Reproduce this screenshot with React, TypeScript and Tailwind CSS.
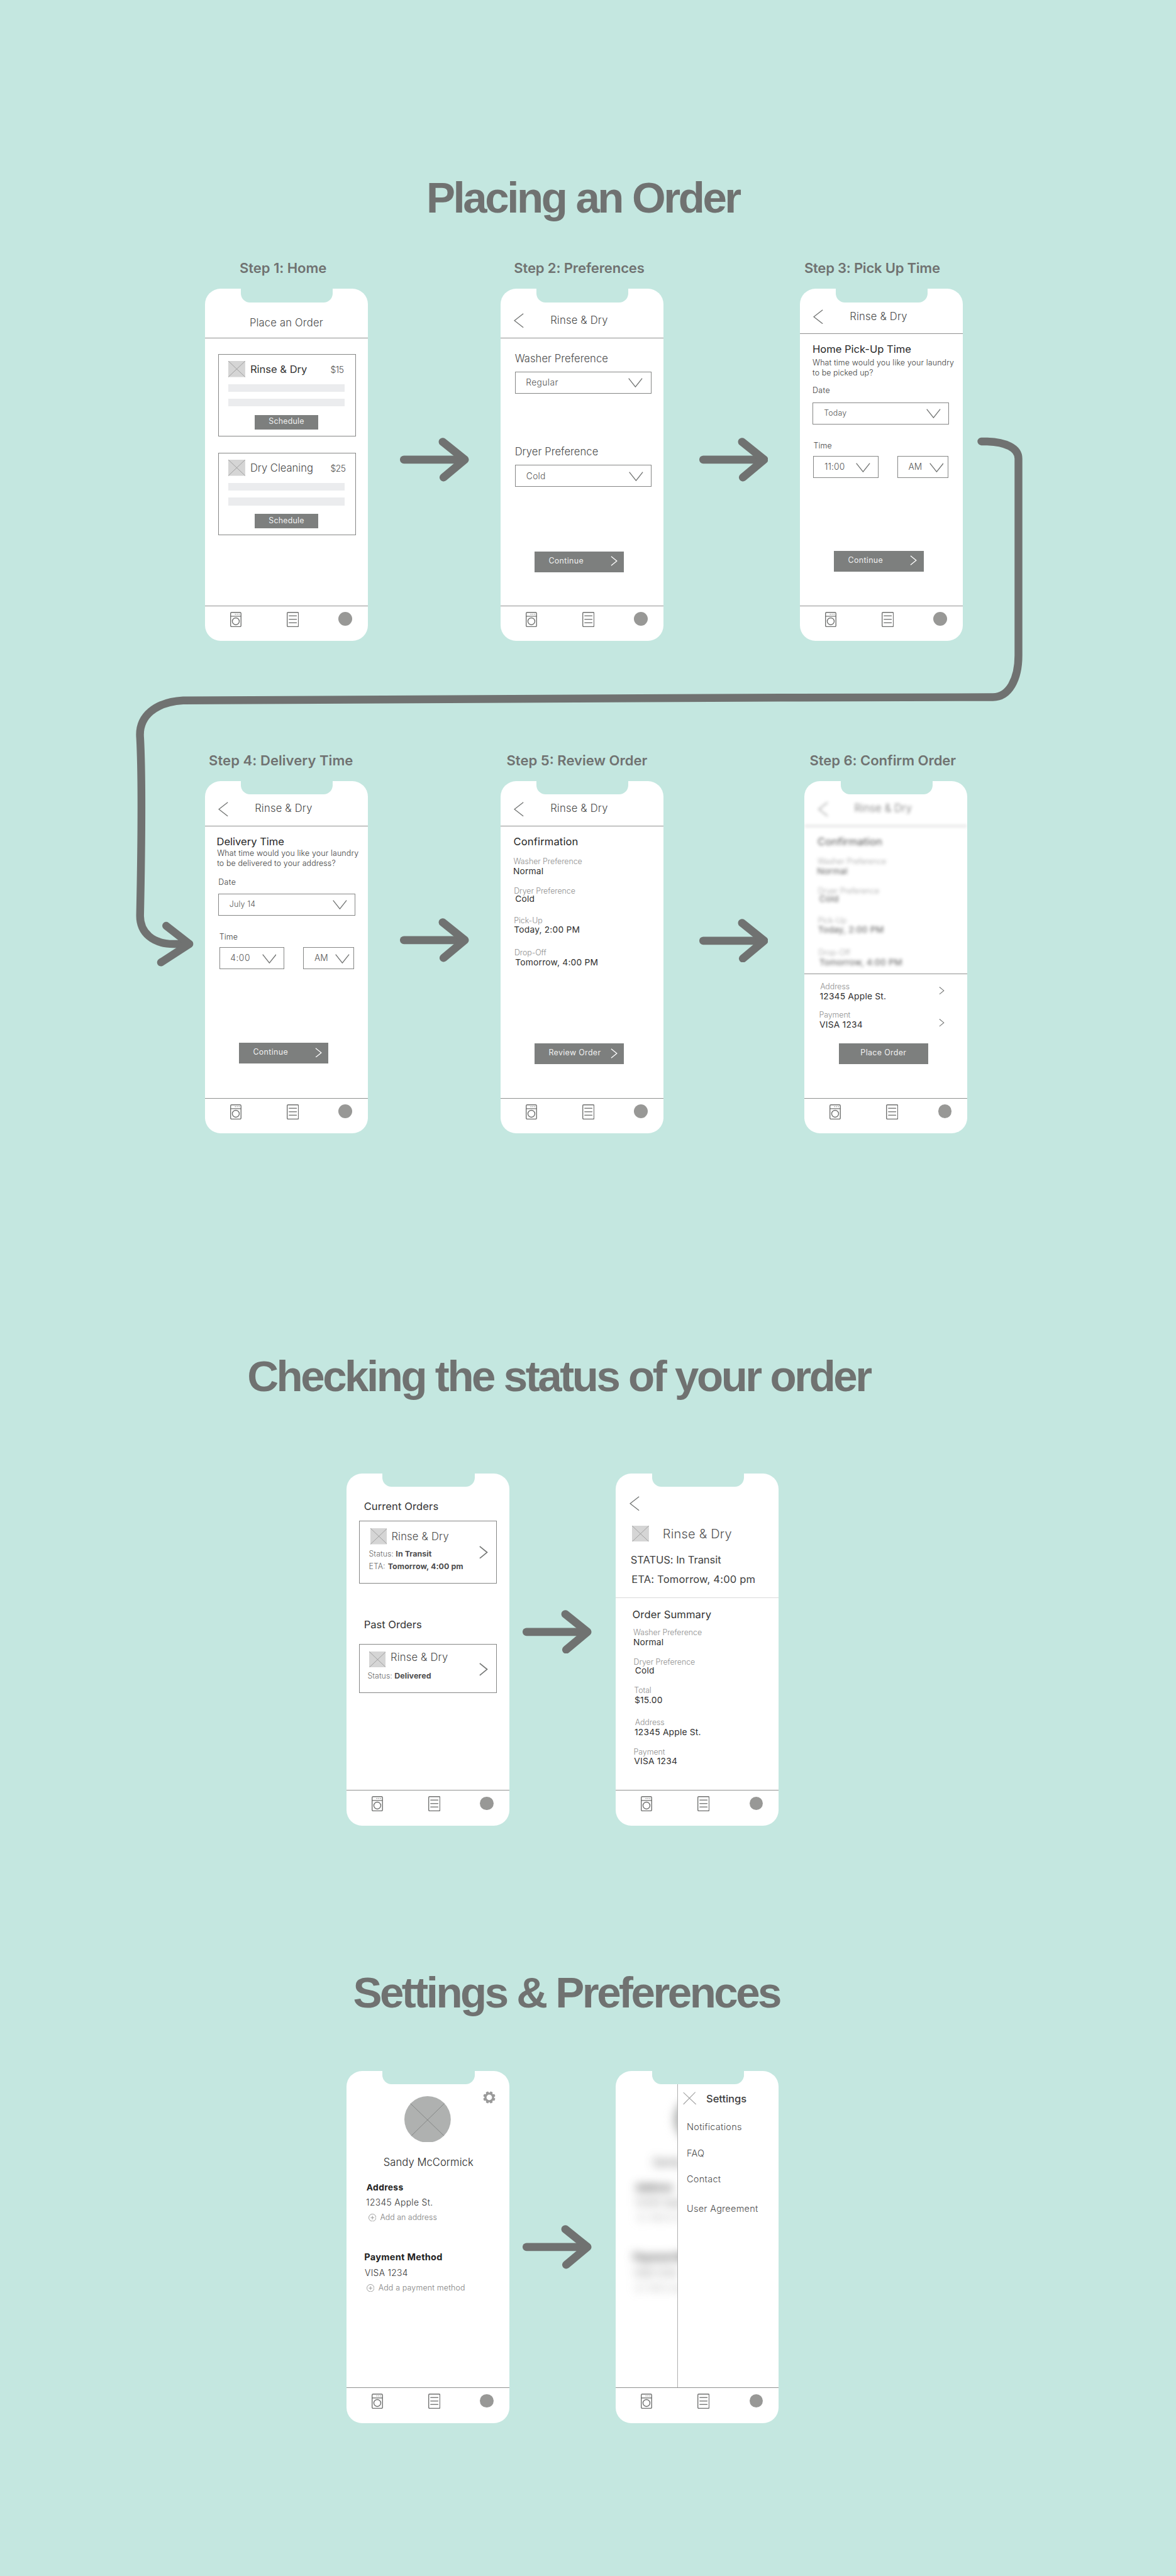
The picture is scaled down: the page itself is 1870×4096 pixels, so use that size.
import type { ReactNode } from "react";

/* ---------- drawings ---------- */

function Arrow({ className }: { className: string }) {
  return (
    <svg
      className={`h-[101px] w-[159px] shrink-0 ${className}`}
      viewBox="0 0 159 101"
      fill="none"
      stroke="#707271"
      strokeWidth="18.5"
      strokeLinecap="round"
      strokeLinejoin="round"
    >
      <path d="M9.2 50.5H148" />
      <path d="M98.5 9.5L149.5 50.5L100.5 91.5" />
    </svg>
  );
}

function Connector() {
  return (
    <svg
      className="pointer-events-none absolute left-[300px] top-[990px] h-[1260px] w-[2080px]"
      viewBox="300 990 2080 1260"
      fill="none"
      stroke="#707271"
      strokeWidth="18"
      strokeLinecap="round"
      strokeLinejoin="round"
    >
      <path d="M2262.5 1017.5H2276C2318 1019 2348 1032 2348 1057V1511C2348 1566 2326 1607 2289 1607L1800 1608L422 1614.5C360 1618 318 1650 323 1702C328 1800 326 1960 322.8 2111C322.8 2150 352 2176 400 2176H436" />
      <path d="M383 2134L436.5 2176L371 2218.5" />
    </svg>
  );
}

function BackChevron({ className = "" }: { className?: string }) {
  return (
    <svg className={`h-[34px] w-[23px] shrink-0 ${className}`} viewBox="0 0 23 34" fill="none" stroke="#737574" strokeWidth="2">
      <path d="M22 1L1.5 17L22 33" />
    </svg>
  );
}

function DownChevron({ className = "" }: { className?: string }) {
  return (
    <svg className={`h-[22px] w-[33px] shrink-0 ${className}`} viewBox="0 0 33 22" fill="none" stroke="#737574" strokeWidth="2">
      <path d="M1 1L16.5 20.5L32 1" />
    </svg>
  );
}

function NextChevron({ className }: { className: string }) {
  return (
    <svg className={`shrink-0 ${className}`} viewBox="0 0 16 24" fill="none" stroke="currentColor" strokeWidth="2">
      <path d="M1 1L14.5 12L1 23" />
    </svg>
  );
}

function Thumb({ className }: { className: string }) {
  return (
    <svg className={`h-[37px] w-[39px] shrink-0 ${className}`} viewBox="0 0 39 37">
      <rect width="39" height="37" fill="#D5D5D5" />
      <path d="M0 0L39 37M39 0L0 37" stroke="#9B9B9B" strokeWidth="1.3" />
    </svg>
  );
}

function WasherIcon() {
  return (
    <svg className="h-[35px] w-[26px]" viewBox="0 0 26 35" fill="none" stroke="#6F706F" strokeWidth="2">
      <rect x="1" y="1" width="24" height="33" rx="2.5" />
      <path d="M1 10H25" />
      <circle cx="13" cy="21.7" r="8" />
      <path d="M11 5.5h2M15.2 5.5h2M19.6 5.5h2" strokeWidth="1.6" />
    </svg>
  );
}

function ListIcon() {
  return (
    <svg className="h-[35px] w-[28px]" viewBox="0 0 28 35" fill="none" stroke="#6F706F" strokeWidth="2">
      <rect x="1" y="1" width="26" height="33" rx="2" />
      <path d="M5.5 9H22.5M5.5 17H22.5M5.5 25H22.5" stroke="#808180" strokeLinecap="round" />
    </svg>
  );
}

const TEETH = [22.5, 67.5, 112.5, 157.5, 202.5, 247.5, 292.5, 337.5];

function Gear() {
  return (
    <svg className="absolute left-[315px] top-[47px] size-[29px]" viewBox="-14.5 -14.5 29 29">
      <circle r="8.8" fill="none" stroke="#9A9A9A" strokeWidth="4.8" />
      {TEETH.map((angle) => (
        <rect key={angle} x="-3.1" y="-14" width="6.2" height="6.5" rx="1.6" fill="#9A9A9A" transform={`rotate(${angle})`} />
      ))}
    </svg>
  );
}

function PlusCircle() {
  return (
    <svg className="size-[18px] shrink-0" viewBox="0 0 18 18" fill="none" stroke="#8A8A8A" strokeWidth="1.2">
      <circle cx="9" cy="9" r="8.3" />
      <path d="M9 4.8V13.2M4.8 9H13.2" />
    </svg>
  );
}

/* ---------- phone parts ---------- */

function Phone({ children }: { children: ReactNode }) {
  return (
    <div className="relative flex h-[812px] w-[375px] shrink-0 flex-col overflow-hidden rounded-[36px] bg-white">
      <div className="absolute left-[83px] top-0 z-10 h-[31px] w-[212px] rounded-b-[21px] bg-[#C4E7E0]" />
      <div className="relative flex h-[730px] flex-col items-start overflow-hidden">{children}</div>
      <div className="flex h-[82px] items-start border-t border-[#8F908F] pt-[13px]">
        <div className="ml-[58px]">
          <WasherIcon />
        </div>
        <div className="ml-[104px]">
          <ListIcon />
        </div>
        <div className="ml-[92px] mt-px size-[31px] rounded-full bg-[#989896]" />
      </div>
    </div>
  );
}

function Header({ title, className = "h-[104px] pt-[24px]", back = true }: { title: string; className?: string; back?: boolean }) {
  return (
    <div className={`flex w-full shrink-0 items-center border-b border-[#8F908F] ${className}`}>
      {back && <BackChevron className="ml-[31px] mt-[2px]" />}
      <span className={`text-[24px] font-light leading-6 tracking-[0.3px] text-[#4A4A4A] ${back ? "ml-[61px]" : "ml-[103px]"}`}>{title}</span>
    </div>
  );
}

function Select({ value, className, chevron }: { value: string; className: string; chevron: string }) {
  return (
    <div className={`flex h-[51px] shrink-0 items-center justify-between border border-[#858685] ${className}`}>
      <span className="leading-6 text-[#555555]">{value}</span>
      <DownChevron className={chevron} />
    </div>
  );
}

function Button({ label, className, next = true }: { label: string; className: string; next?: boolean }) {
  return (
    <div
      className={`ml-[79px] flex h-[48px] w-[206px] shrink-0 items-center bg-[#7D7F7E] pb-[3px] text-[18px] tracking-[0.5px] text-[#F1F1F1] ${
        next ? "justify-between pl-[32px] pr-[15px]" : "justify-center"
      } ${className}`}
    >
      <span>{label}</span>
      {next && <NextChevron className="h-[23px] w-[16px] text-white" />}
    </div>
  );
}

function Detail({ label, value, className, valueClass }: { label: string; value: string; className: string; valueClass: string }) {
  return (
    <div className={className}>
      <div className="text-[18px] font-light leading-5 tracking-[-0.1px] text-[#8F8F8F]">{label}</div>
      <div className={`text-[20px] leading-5 tracking-[0.3px] text-[#2E2E2E] ${valueClass}`}>{value}</div>
    </div>
  );
}

function ServiceCard({ name, price, className, nameClass }: { name: string; price: string; className: string; nameClass: string }) {
  return (
    <div className={`ml-[31px] h-[190px] w-[317px] shrink-0 border border-[#858685] ${className}`}>
      <div className="flex items-center pl-[21px] pt-[15px]">
        <Thumb className="" />
        <span className={`ml-[12px] w-[185px] text-[24px] leading-6 ${nameClass}`}>{name}</span>
        <span className="mt-[4px] text-[20px] font-light leading-6 tracking-[-0.6px] text-[#4A4A4A]">{price}</span>
      </div>
      <div className="ml-[21px] mt-[16px] h-[18px] w-[269px] bg-[#EBECEE]" />
      <div className="ml-[21px] mt-[16px] h-[18px] w-[269px] bg-[#EBECEE]" />
      <div className="ml-[82px] mt-[19px] flex h-[34px] w-[147px] items-center justify-center bg-[#7D7F7E] pb-[2px] text-[18px] tracking-[0.3px] text-[#F1F1F1]">
        Schedule
      </div>
    </div>
  );
}

/* ---------- screens ---------- */

function HomeScreen() {
  return (
    <Phone>
      <Header title="Place an Order" className="h-[114px] pt-[43px]" back={false} />
      <ServiceCard name="Rinse & Dry" price="$15" className="mt-[36px]" nameClass="text-[#333333]" />
      <ServiceCard name="Dry Cleaning" price="$25" className="mt-[38px]" nameClass="font-light text-[#4A4A4A]" />
    </Phone>
  );
}

function PreferencesScreen() {
  return (
    <Phone>
      <Header title="Rinse & Dry" className="h-[114px] pt-[33px]" />
      <div className="ml-[33px] mt-[35px] text-[24px] font-light leading-6 tracking-[0.1px] text-[#4A4A4A]">Washer Preference</div>
      <Select value="Regular" className="ml-[33px] mt-[18px] w-[315px] pl-[24px] pr-[19px] text-[20px] font-light tracking-[0.6px]" chevron="" />
      <div className="ml-[33px] mt-[122px] text-[24px] font-light leading-6 tracking-[0.1px] text-[#4A4A4A]">Dryer Preference</div>
      <Select value="Cold" className="ml-[33px] mt-[18px] w-[315px] pl-[25px] pr-[17px] text-[20px] font-light tracking-[0.4px]" chevron="mt-[2px]" />
      <Button label="Continue" className="mt-[148px]" />
    </Phone>
  );
}

function PickUpScreen() {
  return (
    <Phone>
      <Header title="Rinse & Dry" />
      <div className="ml-[29px] mt-[23px] text-[24px] leading-6 text-[#262626]">Home Pick-Up Time</div>
      <div className="ml-[29px] mt-[8px] text-[18px] font-light leading-[23.4px] text-[#3D3D3D]">
        <div className="whitespace-nowrap tracking-[0.2px]">What time would you like your laundry</div>
        <div className="tracking-[0.1px]">to be picked up?</div>
      </div>
      <div className="ml-[29px] mt-[17px] text-[18px] font-light leading-6 tracking-[0.6px] text-[#3D3D3D]">Date</div>
      <Select value="Today" className="ml-[29px] mt-[15px] w-[314px] pl-[25px] pr-[17px] text-[18px] font-light tracking-[0.2px]" chevron="" />
      <div className="ml-[31px] mt-[38px] text-[18px] font-light leading-6 tracking-[0.2px] text-[#3D3D3D]">Time</div>
      <div className="ml-[31px] mt-[10px] flex">
        <Select value="11:00" className="w-[150px] pl-[24px] pr-[17px] text-[20px] font-light tracking-[0.2px]" chevron="mt-[4px]" />
        <Select value="AM" className="ml-[43.5px] w-[117px] pl-[24px] pr-[9px] text-[20px] font-light" chevron="mt-[4px]" />
      </div>
      <Button label="Continue" className="mt-[168px]" />
    </Phone>
  );
}

function DeliveryScreen() {
  return (
    <Phone>
      <Header title="Rinse & Dry" />
      <div className="ml-[27px] mt-[23px] text-[24px] leading-6 text-[#262626]">Delivery Time</div>
      <div className="ml-[28px] mt-[4.6px] text-[18px] font-light leading-[22.8px] text-[#3D3D3D]">
        <div className="whitespace-nowrap tracking-[0.2px]">What time would you like your laundry</div>
        <div className="tracking-[0.15px]">to be delivered to your address?</div>
      </div>
      <div className="ml-[31px] mt-[20px] text-[18px] font-light leading-6 tracking-[0.6px] text-[#3D3D3D]">Date</div>
      <Select value="July 14" className="ml-[31px] mt-[14px] w-[315px] pl-[24px] pr-[17px] text-[18px] font-light tracking-[0.2px]" chevron="" />
      <div className="ml-[33px] mt-[38px] text-[18px] font-light leading-6 tracking-[0.2px] text-[#3D3D3D]">Time</div>
      <div className="ml-[33px] mt-[10px] flex">
        <Select value="4:00" className="w-[150px] pl-[24px] pr-[17px] text-[20px] font-light tracking-[0.8px]" chevron="mt-[4px]" />
        <Select value="AM" className="ml-[44px] w-[117px] pl-[24px] pr-[9px] text-[20px] font-light" chevron="mt-[4px]" />
      </div>
      <Button label="Continue" className="mt-[170px]" />
    </Phone>
  );
}

function Confirmation() {
  return (
    <>
      <Header title="Rinse & Dry" />
      <div className="ml-[30px] mt-[23px] text-[24px] leading-6 tracking-[0.2px] text-[#262626]">Confirmation</div>
      <Detail label="Washer Preference" value="Normal" className="ml-[30px] mt-[24px]" valueClass="-ml-px mt-[3px]" />
      <Detail label="Dryer Preference" value="Cold" className="ml-[31px] mt-[25px]" valueClass="ml-[3px]" />
      <Detail label="Pick-Up" value="Today, 2:00 PM" className="ml-[31px] mt-[28px]" valueClass="mt-[2px]" />
      <Detail label="Drop-Off" value="Tomorrow, 4:00 PM" className="ml-[32px] mt-[33px]" valueClass="ml-[2px] mt-[3px]" />
    </>
  );
}

function ReviewScreen() {
  return (
    <Phone>
      <Confirmation />
      <Button label="Review Order" className="mt-[176px]" />
    </Phone>
  );
}

function ConfirmScreen() {
  return (
    <Phone>
      <div className="flex h-[444px] w-full shrink-0 flex-col items-start overflow-hidden">
        <div className="flex w-full flex-col items-start opacity-80 blur-[4px]">
          <Confirmation />
        </div>
      </div>
      <div className="flex w-full flex-col items-start border-t border-[#8F908F] pt-[18px]">
        <div className="flex w-full items-start justify-between pr-[52px]">
          <Detail label="Address" value="12345 Apple St." className="ml-[36px]" valueClass="-ml-px mt-[3px]" />
          <NextChevron className="mt-[10px] h-[18px] w-[13px] text-[#737574]" />
        </div>
        <div className="mt-[23px] flex w-full items-start justify-between pr-[52px]">
          <Detail label="Payment" value="VISA 1234" className="ml-[33.5px]" valueClass="ml-px mt-[3px]" />
          <NextChevron className="mt-[19px] h-[18px] w-[13px] text-[#737574]" />
        </div>
        <Button label="Place Order" className="mt-[32px]" next={false} />
      </div>
    </Phone>
  );
}

function OrdersScreen() {
  return (
    <Phone>
      <div className="ml-[40px] mt-[64px] text-[24px] leading-6 tracking-[0.15px] text-[#333333]">Current Orders</div>
      <div className="ml-[29px] mt-[21px] flex h-[145px] w-[317px] shrink-0 justify-between border border-[#858685] pl-[21px] pr-[19px]">
        <div className="pt-[16px]">
          <div className="flex items-center">
            <Thumb className="ml-[3px]" />
            <span className="ml-[10px] text-[24px] font-light leading-6 tracking-[0.3px] text-[#4A4A4A]">Rinse &amp; Dry</span>
          </div>
          <div className="mt-[13px] flex gap-[5px] whitespace-nowrap text-[18px] leading-5">
            <span className="font-light text-[#6B6B6B]">Status:</span>
            <span className="font-bold tracking-[0.1px] text-[#4D4D4D]">In Transit</span>
          </div>
          <div className="mt-[8px] flex gap-[6px] whitespace-nowrap text-[18px] leading-5">
            <span className="font-light text-[#6B6B6B]">ETA:</span>
            <span className="font-bold tracking-[0.1px] text-[#4D4D4D]">Tomorrow, 4:00 pm</span>
          </div>
        </div>
        <NextChevron className="h-[30px] w-[20px] self-center text-[#737574]" />
      </div>
      <div className="ml-[40px] mt-[83px] text-[24px] leading-6 text-[#333333]">Past Orders</div>
      <div className="ml-[29px] mt-[32px] flex h-[113px] w-[317px] shrink-0 justify-between border border-[#858685] pl-[18px] pr-[19px]">
        <div className="pt-[16px]">
          <div className="flex items-start">
            <Thumb className="ml-[3px]" />
            <span className="ml-[11px] mt-[2px] text-[24px] font-light leading-6 tracking-[0.3px] text-[#4A4A4A]">Rinse &amp; Dry</span>
          </div>
          <div className="mt-[10px] flex gap-[5px] whitespace-nowrap text-[18px] leading-5">
            <span className="font-light text-[#6B6B6B]">Status:</span>
            <span className="font-bold tracking-[0.1px] text-[#4D4D4D]">Delivered</span>
          </div>
        </div>
        <NextChevron className="mt-[5px] h-[30px] w-[20px] self-center text-[#737574]" />
      </div>
    </Phone>
  );
}

function OrderStatusScreen() {
  return (
    <Phone>
      <BackChevron className="ml-[32px] mt-[53px]" />
      <div className="ml-[37px] mt-[33px] flex items-center">
        <Thumb className="" />
        <span className="ml-[32px] mt-[3px] text-[29px] font-light leading-8 tracking-[0.3px] text-[#555555]">Rinse &amp; Dry</span>
      </div>
      <div className="ml-[34px] mt-[31px] text-[24px] leading-6 tracking-[-0.1px] text-[#404040]">STATUS: In Transit</div>
      <div className="ml-[36px] mt-[21px] whitespace-nowrap text-[24px] leading-6 tracking-[0.25px] text-[#404040]">ETA: Tomorrow, 4:00 pm</div>
      <div className="mt-[29px] h-px w-full shrink-0 bg-[#DADADA]" />
      <div className="ml-[38px] mt-[26px] text-[24px] leading-6 tracking-[0.2px] text-[#333333]">Order Summary</div>
      <Detail label="Washer Preference" value="Normal" className="ml-[40px] mt-[20px]" valueClass="mt-[3px]" />
      <Detail label="Dryer Preference" value="Cold" className="ml-[41px] mt-[25px]" valueClass="ml-[3px]" />
      <Detail label="Total" value="$15.00" className="ml-[42px] mt-[26px]" valueClass="ml-px mt-[2px]" />
      <Detail label="Address" value="12345 Apple St." className="ml-[44px] mt-[32px]" valueClass="-ml-px mt-[3px]" />
      <Detail label="Payment" value="VISA 1234" className="ml-[41px] mt-[24px]" valueClass="ml-px mt-[3px]" />
    </Phone>
  );
}

function Profile() {
  return (
    <>
      <svg className="ml-[134px] mt-[58px] size-[107px] shrink-0" viewBox="0 0 107 107">
        <circle cx="53.5" cy="53.5" r="53.5" fill="#AFB1B0" />
        <path d="M14 17L91 91M92 17L16.5 91" stroke="#7D7F7E" strokeWidth="1.2" />
      </svg>
      <div className="ml-[85px] mt-[34px] whitespace-nowrap text-[24px] font-light leading-6 tracking-[0.15px] text-[#262626]">Sandy McCormick</div>
      <div className="ml-[46px] mt-[34px] text-[20px] font-bold leading-6 tracking-[0.5px] text-[#222222]">Address</div>
      <div className="ml-[45px] mt-[11px] whitespace-nowrap text-[20px] font-light leading-6 tracking-[0.55px] text-[#333333]">12345 Apple St.</div>
      <div className="ml-[50px] mt-[11px] flex items-center gap-[9.5px] text-[18px] font-light leading-6 text-[#808080]">
        <PlusCircle />
        <span className="whitespace-nowrap">Add an address</span>
      </div>
      <div className="ml-[41px] mt-[68px] whitespace-nowrap text-[21px] font-bold leading-6 tracking-[0.45px] text-[#222222]">Payment Method</div>
      <div className="ml-[42px] mt-[11px] text-[20px] font-light leading-6 tracking-[0.5px] text-[#333333]">VISA 1234</div>
      <div className="ml-[46px] mt-[11px] flex items-center gap-[9.5px] text-[18px] font-light leading-6 tracking-[0.25px] text-[#808080]">
        <PlusCircle />
        <span className="whitespace-nowrap">Add a payment method</span>
      </div>
    </>
  );
}

function ProfileScreen() {
  return (
    <Phone>
      <Profile />
      <Gear />
    </Phone>
  );
}

function SettingsScreen() {
  return (
    <Phone>
      <div className="flex h-full w-full">
        <div className="h-full w-[142px] shrink-0 overflow-hidden">
          <div className="flex w-[375px] flex-col items-start blur-[11px]">
            <Profile />
          </div>
        </div>
        <div className="flex h-full flex-1 flex-col items-start border-l-2 border-[#B0B0B0] pl-[20px] text-[21px] font-light leading-6 tracking-[0.4px] text-[#4D4D4D]">
          <div className="-ml-[9px] mt-[48px] flex h-[31px] items-center">
            <svg className="h-[30px] w-[31px]" viewBox="0 0 31 30" fill="none" stroke="#A3A3A3" strokeWidth="1.6">
              <path d="M1 1.5L30 29M28.5 1L1 29" />
            </svg>
            <span className="ml-[23px] mt-[3px] text-[24px] font-medium leading-6 tracking-[-0.1px] text-[#3D3D3D]">Settings</span>
          </div>
          <span className="mt-[39px]">Notifications</span>
          <span className="mt-[37px]">FAQ</span>
          <span className="mt-[36px]">Contact</span>
          <span className="mt-[44px] whitespace-nowrap">User Agreement</span>
        </div>
      </div>
    </Phone>
  );
}

/* ---------- flow ---------- */

function Step({ label, labelClass, className = "", children }: { label: string; labelClass: string; className?: string; children: ReactNode }) {
  return (
    <div className={`flex w-[375px] shrink-0 flex-col gap-[27px] ${className}`}>
      <div className={`h-[40px] whitespace-nowrap text-[32px] font-semibold leading-[40px] text-[#707271] ${labelClass}`}>{label}</div>
      {children}
    </div>
  );
}

function Heading({ children, className }: { children: ReactNode; className: string }) {
  return (
    <h1 className={`h-[100px] whitespace-nowrap font-['Liberation_Sans',Arial,sans-serif] text-[100px] font-bold leading-[100px] text-[#707271] ${className}`}>
      {children}
    </h1>
  );
}

export default function App() {
  return (
    <div className="h-[4096px] w-full overflow-hidden bg-[#C4E7E0] font-['Inter',sans-serif]">
      <div className="relative flex h-[5939px] w-[2711px] flex-col [zoom:0.6897]">
        <Heading className="ml-[983px] mt-[408px] tracking-[-4.9px]">Placing an Order</Heading>

        <div className="ml-[472.5px] mt-[91px] flex items-start">
          <Step label="Step 1: Home" labelClass="pl-[80px] tracking-[-0.1px]">
            <HomeScreen />
          </Step>
          <Arrow className="ml-[75px] mt-[410px]" />
          <Step label="Step 2: Preferences" labelClass="pl-[31px] tracking-[-0.2px]" className="ml-[72.5px]">
            <PreferencesScreen />
          </Step>
          <Arrow className="ml-[83px] mt-[410px]" />
          <Step label="Step 3: Pick Up Time" labelClass="pl-[10px] tracking-[-0.35px]" className="ml-[73.4px]">
            <PickUpScreen />
          </Step>
        </div>

        <div className="ml-[472.5px] mt-[256px] flex items-start">
          <Step label="Step 4: Delivery Time" labelClass="pl-[9px] tracking-[0.05px]">
            <DeliveryScreen />
          </Step>
          <Arrow className="ml-[75px] mt-[383px]" />
          <Step label="Step 5: Review Order" labelClass="pl-[14px]" className="ml-[72.5px]">
            <ReviewScreen />
          </Step>
          <Arrow className="ml-[83px] mt-[384px]" />
          <Step label="Step 6: Confirm Order" labelClass="pl-[12px] tracking-[-0.1px]" className="ml-[84px]">
            <ConfirmScreen />
          </Step>
        </div>

        <Heading className="ml-[570px] mt-[512px] tracking-[-4.97px]">Checking the status of your order</Heading>

        <div className="ml-[799px] mt-[172px] flex items-start">
          <OrdersScreen />
          <Arrow className="ml-[31.5px] mt-[314.5px]" />
          <div className="ml-[55.5px]">
            <OrderStatusScreen />
          </div>
        </div>

        <Heading className="ml-[814px] mt-[337px] tracking-[-5.05px]">Settings &amp; Preferences</Heading>

        <div className="ml-[799px] mt-[128px] flex items-start">
          <ProfileScreen />
          <Arrow className="ml-[31.5px] mt-[356px]" />
          <div className="ml-[55.5px]">
            <SettingsScreen />
          </div>
        </div>

        <Connector />
      </div>
    </div>
  );
}
